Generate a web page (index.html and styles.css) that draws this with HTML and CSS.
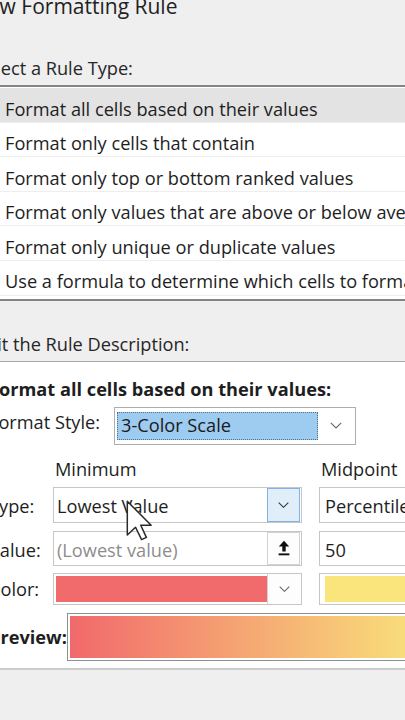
FILE: index.html
```html
<!DOCTYPE html>
<html lang="en">
<head>
<meta charset="utf-8">
<title>New Formatting Rule</title>
<link rel="stylesheet" href="styles.css">
</head>
<body>
<div class="dialog">
  <div class="title">New Formatting Rule</div>
  <div class="section-label">Select a Rule Type:</div>
  <ul class="rule-list">
    <li class="selected">Format all cells based on their values</li>
    <li>Format only cells that contain</li>
    <li>Format only top or bottom ranked values</li>
    <li>Format only values that are above or below average</li>
    <li>Format only unique or duplicate values</li>
    <li>Use a formula to determine which cells to format</li>
  </ul>
  <div class="section-label desc-label">Edit the Rule Description:</div>
  <div class="panel">
    <div class="heading">Format all cells based on their values:</div>
    <div class="style-row">
      <span class="style-label">Format Style:</span>
      <div class="combo">
        <div class="combo-sel">3-Color Scale</div>
        <div class="combo-drop">
          <svg width="12" height="7" viewBox="0 0 12 7"><polyline points="0.8,0.8 6,6 11.2,0.8" fill="none" stroke="#6a6a6a" stroke-width="1.2"/></svg>
        </div>
      </div>
    </div>
    <div class="srow head">
      <span class="slabel"></span>
      <span class="col-head">Minimum</span>
      <span class="col-head">Midpoint</span>
    </div>
    <div class="srow type">
      <span class="slabel">Type:</span>
      <div class="box">
        <span class="box-text">Lowest Value</span>
        <span class="btn btn-hover">
          <svg width="11" height="6" viewBox="0 0 11 6"><polyline points="0.7,0.7 5.5,5.3 10.3,0.7" fill="none" stroke="#333" stroke-width="1.1"/></svg>
        </span>
      </div>
      <div class="box mid">
        <span class="box-text">Percentile</span>
      </div>
    </div>
    <div class="srow value">
      <span class="slabel">Value:</span>
      <div class="box">
        <span class="box-text muted">(Lowest value)</span>
        <span class="btn btn-plain">
          <svg width="12" height="16" viewBox="0 0 12 16"><path d="M6 0.8 L11.2 6.6 H7.7 V11.4 H4.3 V6.6 H0.8 Z" fill="#111"/><rect x="0.6" y="13.4" width="10.8" height="1.9" fill="#111"/></svg>
        </span>
      </div>
      <div class="box mid">
        <span class="box-text">50</span>
      </div>
    </div>
    <div class="srow color">
      <span class="slabel">Color:</span>
      <div class="box swatch-box">
        <span class="swatch red"></span>
        <span class="btn btn-color">
          <svg width="11" height="6" viewBox="0 0 11 6"><polyline points="0.7,0.7 5.5,5.3 10.3,0.7" fill="none" stroke="#666" stroke-width="1.1"/></svg>
        </span>
      </div>
      <div class="box swatch-box mid">
        <span class="swatch yellow"></span>
      </div>
    </div>
    <div class="preview-row">
      <span class="preview-label">Preview:</span>
      <div class="preview-bar"><div class="preview-fill"></div></div>
    </div>
  </div>
</div>
<svg class="cursor" width="26" height="43" viewBox="0 0 12 19"><path d="M0.6 0.6 V16.2 L4.4 12.6 L7.2 18.3 L9.4 17.3 L6.8 11.7 H11.6 Z" fill="#fff" stroke="#2a2a2a" stroke-width="0.7" stroke-linejoin="round"/></svg>
</body>
</html>
```
FILE: styles.css
```css
html, body {
  margin: 0;
  width: 405px;
  height: 720px;
  overflow: hidden;
}
body {
  position: relative;
  background: #efefef;
  font-family: "Open Sans", "Noto Sans", sans-serif;
  font-size: 18.2px;
  color: #1e1e1e;
}
.dialog {
  display: flow-root;
  margin-left: -24px;
  width: 840px;
}
.title {
  font-size: 21px;
  line-height: 24px;
  margin-top: -6px;
  margin-left: -4px;
  white-space: nowrap;
  color: #222;
}
.section-label {
  line-height: 22px;
  margin-top: 39px;
  white-space: nowrap;
  color: #262626;
}
.rule-list {
  list-style: none;
  margin: 6px 0 0;
  padding: 1px 0 3.4px;
  border-top: 2px solid #858585;
  border-bottom: 2px solid #858585;
  background: #fff;
}
.rule-list li {
  box-sizing: border-box;
  height: 34.6px;
  padding: 7.5px 0 0 29px;
  line-height: 26.1px;
  border-bottom: 1px solid #eeeeee;
  white-space: nowrap;
}
.rule-list li.selected {
  background: #e3e3e3;
}
.desc-label {
  margin-top: 32px;
}
.panel {
  margin-top: 6px;
  border-top: 1px solid #a9a9a9;
  border-bottom: 2px solid #cbcbcb;
  background: #fff;
  padding: 16px 0 7px 13px;
}
.heading {
  font-weight: 700;
  line-height: 22px;
  white-space: nowrap;
}
.style-row {
  display: flex;
  align-items: flex-start;
  height: 38px;
  margin-top: 7px;
}
.style-label {
  flex: 0 0 125px;
  min-width: 0;
  padding-top: 4px;
  line-height: 22px;
  white-space: nowrap;
}
.combo {
  box-sizing: border-box;
  display: flex;
  width: 242px;
  height: 38px;
  border: 1px solid #adadad;
  padding: 4px 2px 4px 2px;
  background: #fff;
}
.combo-sel {
  box-sizing: border-box;
  width: 201px;
  height: 28px;
  border: 1px dotted #4f6f8f;
  background: #9ecbf0;
  padding-left: 3px;
  line-height: 25px;
  color: #1a1a1a;
  white-space: nowrap;
}
.combo-drop {
  flex: 1;
  display: flex;
  align-items: center;
  justify-content: center;
}
.srow {
  display: flex;
  gap: 17px;
  align-items: center;
}
.slabel {
  flex: 0 0 47px;
  min-width: 0;
  line-height: 22px;
  white-space: nowrap;
}
.col-head {
  flex: 0 0 249px;
  box-sizing: border-box;
  line-height: 22px;
  padding-left: 2px;
}
.head {
  margin-top: 13px;
}
.box {
  box-sizing: border-box;
  flex: 0 0 249px;
  display: flex;
  align-items: center;
  height: 100%;
  border: 1px solid #c6c6c6;
  background: #fff;
  padding: 0 1px 0 3px;
}
.box.mid {
  padding-left: 5px;
}
.box-text {
  flex: 1;
  line-height: 22px;
  white-space: nowrap;
}
.type .box-text,
.type .slabel {
  padding-top: 2px;
}
.value .box-text,
.value .slabel {
  padding-top: 4px;
}
.color .slabel {
  padding-top: 1px;
}
.muted {
  color: #8d8d8d;
}
.type {
  margin-top: 7px;
  height: 36px;
}
.value {
  margin-top: 8px;
  height: 35px;
}
.color {
  margin-top: 7px;
  height: 32px;
}
.btn {
  box-sizing: border-box;
  display: flex;
  align-items: center;
  justify-content: center;
  width: 33px;
  height: 100%;
}
.btn-hover {
  height: 34px;
  border: 1px solid #7fb2e5;
  background: #e0eef9;
}
.btn-plain {
  height: 33px;
  border: 1px solid #d2d2d2;
  background: #fdfdfd;
}
.swatch-box {
  padding: 2px 1px 2px 2px;
}
.swatch {
  flex: 1;
  height: 100%;
}
.red {
  background: #f16a6c;
}
.yellow {
  background: #f9e57b;
}
.btn-color {
  height: 30px;
  margin-top: -1px;
  margin-bottom: -1px;
  border-left: 1px solid #d2d2d2;
  background: #fdfdfd;
}
.preview-row {
  display: flex;
  align-items: center;
  height: 48px;
  margin-top: 8px;
}
.preview-label {
  flex: 0 0 78px;
  min-width: 0;
  font-weight: 700;
  line-height: 22px;
  white-space: nowrap;
}
.preview-bar {
  box-sizing: border-box;
  width: 726px;
  height: 48px;
  border: 1px solid #8f8f8f;
  padding: 2px;
  background: #fff;
}
.preview-fill {
  height: 100%;
  background: linear-gradient(to right, #f1696b 0%, #f5a873 25%, #f9e57b 50%, #b4d27b 75%, #63be7b 100%);
}
.cursor {
  position: absolute;
  left: 126px;
  top: 499px;
}
```
